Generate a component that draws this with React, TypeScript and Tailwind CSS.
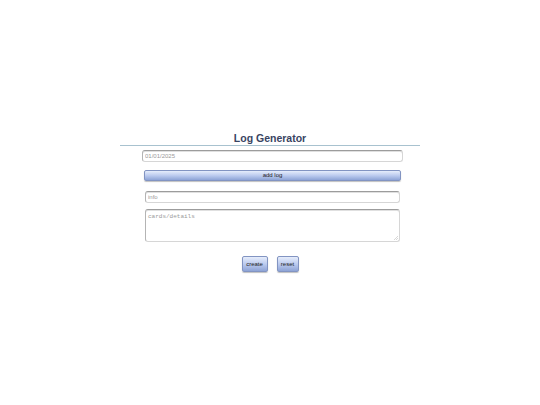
import React from "react";

export default function App() {
  const inputCls =
    "block h-[12px] rounded-[3px] border border-[#d6d6d6] border-t-[#9c9c9c] border-l-[#b4b4b4] bg-white px-[2px] text-[6px] leading-[10px] text-[#555] outline-none placeholder:text-[#9a9a9a] shadow-[inset_0_1px_0_rgba(0,0,0,0.12)]";
  const btnCls =
    "rounded-[2px] border border-[#8294c2] bg-gradient-to-b from-[#e6edfb] via-[#bccbef] to-[#8ea4d6] text-[6px] text-[#222] shadow-[0_1px_1px_rgba(0,0,0,0.25)]";
  return (
    <div
      className="min-h-[405px] w-[540px] bg-white"
      style={{ fontFamily: '"Liberation Sans", Arial, sans-serif' }}
    >
      <div className="mx-auto w-[300px] pt-[132px]">
        <div className="h-[14px] border-b border-[#a8c2cf] text-center text-[10.5px] font-bold leading-[13px] text-[#394462]">
          Log Generator
        </div>
        <div className="pt-[4px] pl-[22px]">
          <input
            readOnly
            placeholder="01/01/2025"
            className={inputCls + " w-[261px]"}
          />
        </div>
        <div className="pt-[8px] pl-[24px]">
          <button className={btnCls + " block h-[11px] w-[257px] leading-[9px]"}>
            add log
          </button>
        </div>
        <div className="pt-[10px] pl-[25px]">
          <input readOnly placeholder="info" className={inputCls + " w-[255px]"} />
        </div>
        <div className="relative ml-[25px] mt-[6px] w-[255px]">
          <textarea
            readOnly
            placeholder="cards/details"
            className="block h-[33px] w-[255px] resize-none rounded-[3px] border border-[#d6d6d6] border-t-[#9c9c9c] border-l-[#b4b4b4] bg-white px-[2px] py-[3px] text-[6px] leading-[8px] text-[#555] outline-none placeholder:text-[#9a9a9a] shadow-[inset_0_1px_0_rgba(0,0,0,0.12)]"
            style={{ fontFamily: '"Liberation Mono", "DejaVu Sans Mono", monospace' }}
          />
          <svg
            className="pointer-events-none absolute bottom-[2px] right-[2px]"
            width="4"
            height="4"
            viewBox="0 0 4 4"
          >
            <path d="M4 0 L0 4 M4 2 L2 4" stroke="#bdbdbd" strokeWidth="0.6" />
          </svg>
        </div>
        <div className="flex justify-center gap-[9px] pt-[14px]">
          <button className={btnCls + " h-[16px] w-[26px]"}>create</button>
          <button className={btnCls + " h-[16px] w-[22px]"}>reset</button>
        </div>
      </div>
    </div>
  );
}
